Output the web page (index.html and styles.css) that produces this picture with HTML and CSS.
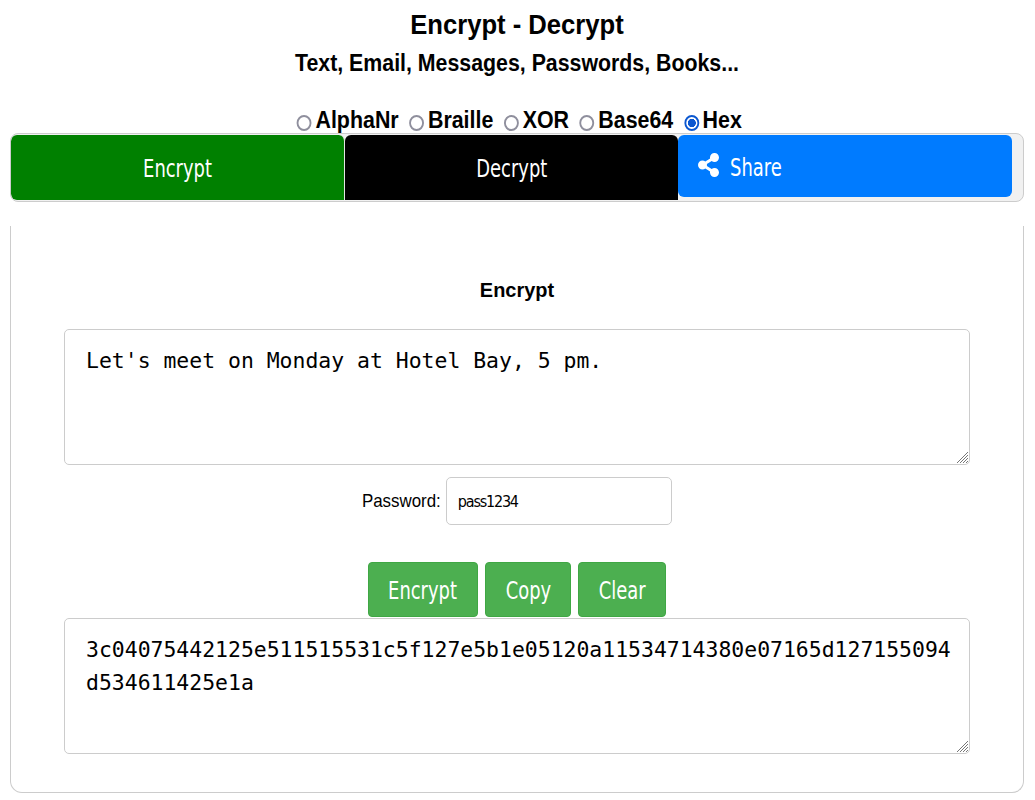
FILE: index.html
```html
<!DOCTYPE html>
<html lang="en">
<head>
    <meta charset="UTF-8">
    <meta name="viewport" content="width=device-width, initial-scale=1.0">
    <title>Encrypt - Decrypt</title>
    <link rel="stylesheet" href="styles.css">
</head>
<body>
    <header class="top">
        <h1>Encrypt - Decrypt</h1>
        <h2>Text, Email, Messages, Passwords, Books...</h2>
        <form class="modes">
            <label><input type="radio" name="mode">AlphaNr</label>
            <label><input type="radio" name="mode">Braille</label>
            <label><input type="radio" name="mode">XOR</label>
            <label><input type="radio" name="mode">Base64</label>
            <label><input type="radio" name="mode" checked>Hex</label>
        </form>
    </header>

    <div class="tabs">
        <button class="tab tab-encrypt"><span class="squeeze">Encrypt</span></button>
        <button class="tab tab-decrypt"><span class="squeeze">Decrypt</span></button>
        <button class="tab tab-share">
            <svg class="share-icon" viewBox="0 0 448 512" width="21" height="26"><path fill="#fff" d="M352 320c-22.600 0-43.400 7.800-59.800 20.900l-102.500-64.100a96.600 96.600 0 0 0 0-41.700l102.500-64.100C308.600 184.200 329.400 192 352 192c53 0 96-43 96-96S405 0 352 0s-96 43-96 96c0 7.200.8 14.100 2.300 20.800L155.800 180.900C139.400 167.800 118.600 160 96 160c-53 0-96 43-96 96s43 96 96 96c22.600 0 43.400-7.800 59.800-20.900l102.500 64.100A96.300 96.300 0 0 0 256 416c0 53 43 96 96 96s96-43 96-96-43-96-96-96z"/></svg>
            <span class="squeeze share-label">Share</span>
        </button>
    </div>

    <main class="panel">
        <h3>Encrypt</h3>
        <textarea class="box" spellcheck="false">Let's meet on Monday at Hotel Bay, 5 pm.</textarea>
        <div class="password">
            <label for="pass">Password:</label>
            <input type="text" id="pass" value="pass1234">
        </div>
        <div class="actions">
            <button class="btn btn-encrypt"><span class="squeeze">Encrypt</span></button>
            <button class="btn btn-copy"><span class="squeeze">Copy</span></button>
            <button class="btn btn-clear"><span class="squeeze">Clear</span></button>
        </div>
        <textarea class="box" spellcheck="false">3c04075442125e511515531c5f127e5b1e05120a11534714380e07165d127155094d534611425e1a</textarea>
    </main>
</body>
</html>
```

FILE: styles.css
```css
body {
    margin: 0;
    padding: 0 11px 0 10px;
    font-family: "Liberation Sans", Arial, sans-serif;
    color: #000;
    background: #fff;
}
.top {
    text-align: center;
}
h1 {
    margin: 0;
    padding-top: 9px;
    font-size: 28px;
    line-height: 32px;
    transform: scaleX(0.915);
}
h2 {
    margin: 0;
    padding-top: 7px;
    font-size: 23px;
    line-height: 30px;
    transform: scaleX(0.927);
}
.modes {
    display: flex;
    justify-content: center;
    gap: 11.5px;
    margin-top: 26px;
    padding-left: 5px;
    height: 29px;
    font-size: 23px;
    font-weight: bold;
    line-height: 32px;
    transform: scaleX(0.93);
}
.modes label {
    display: flex;
    align-items: center;
    height: 32px;
}
.modes input {
    appearance: none;
    box-sizing: border-box;
    width: 16px;
    height: 16px;
    margin: 5px 4px 0 0;
    border: 2px solid #8f8f9d;
    border-radius: 50%;
}
.modes input:checked {
    border-color: #0b57d0;
    background: radial-gradient(circle, #0b57d0 0 4px, #fff 4.5px);
}
.tabs {
    display: grid;
    grid-template-columns: repeat(3, 1fr);
    box-sizing: border-box;
    height: 69px;
    padding: 1px 11px 0 0;
    border: 1px solid #ccc;
    border-radius: 8px;
    background: #f1f1f1;
    overflow: hidden;
}
.squeeze {
    display: inline-block;
    transform: scaleX(0.83);
}
.tab {
    height: 65px;
    border: none;
    border-radius: 6px;
    color: #fff;
    font-family: "DejaVu Sans Condensed", "DejaVu Sans", sans-serif;
    font-stretch: condensed;
    font-size: 24px;
    padding: 3px 0 0;
}
.tab-encrypt {
    background: #008000;
    border-right: 1px solid #e4e4e4;
    border-radius: 6px 6px 0 6px;
}
.tab-decrypt {
    background: #000;
    border-radius: 6px 6px 0 0;
}
.tab-share {
    display: flex;
    align-items: center;
    gap: 11px;
    height: 62px;
    padding: 0 0 0 20px;
    background: #007bff;
}
.share-icon {
    margin-top: -2px;
}
.share-label {
    margin-top: 3px;
    transform-origin: left center;
}
.panel {
    display: flex;
    flex-direction: column;
    box-sizing: border-box;
    height: 567px;
    margin-top: 24px;
    padding: 0 53px;
    border: 1px solid #ccc;
    border-top: none;
    border-radius: 0 0 12px 12px;
}
h3 {
    margin: 0;
    padding-top: 50px;
    height: 53px;
    text-align: center;
    font-size: 21px;
    line-height: 28px;
    transform: scaleX(0.95);
}
.box {
    box-sizing: border-box;
    width: 100%;
    height: 136px;
    margin: 0;
    padding: 14px 17px 12px 21px;
    border: 1px solid #ccc;
    border-radius: 5px;
    font-family: "DejaVu Sans Mono", monospace;
    font-size: 21.45px;
    line-height: 33px;
    color: #000;
    background: #fff url("data:image/svg+xml,%3Csvg xmlns='http://www.w3.org/2000/svg' width='12' height='12'%3E%3Cpath stroke='%23777' d='M1 12 12 1M4 12l8-8M7 12l5-5M10 12l2-2'/%3E%3C/svg%3E") no-repeat right 1px bottom 1px;
    resize: none;
}
.password {
    display: flex;
    justify-content: center;
    align-items: center;
    gap: 5px;
    margin-top: 12px;
    font-size: 19px;
}
.password label {
    margin: 0 -5px;
    transform: scaleX(0.89);
}
.password input {
    box-sizing: border-box;
    width: 226px;
    height: 48px;
    padding: 0 11px;
    border: 1px solid #ccc;
    border-radius: 5px;
    font-family: "DejaVu Sans Condensed", "DejaVu Sans", sans-serif;
    font-stretch: condensed;
    font-size: 16px;
    letter-spacing: -1.2px;
    color: #000;
}
.actions {
    display: flex;
    justify-content: center;
    gap: 7px;
    margin-top: 37px;
    margin-bottom: 1px;
}
.btn {
    height: 55px;
    padding: 2px 0 0;
    border: 1px solid #3fa744;
    border-radius: 4px;
    background: #4caf50;
    color: #fff;
    font-family: "DejaVu Sans Condensed", "DejaVu Sans", sans-serif;
    font-stretch: condensed;
    font-size: 24px;
}
.btn-encrypt {
    width: 110px;
}
.btn-copy {
    width: 86px;
}
.btn-clear {
    width: 88px;
}
```
